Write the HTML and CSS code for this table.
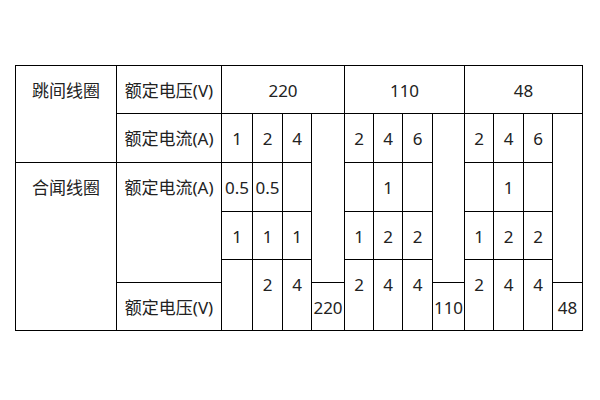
FILE: index.html
```html
<!DOCTYPE html>
<html lang="zh">
<head>
<meta charset="utf-8">
<link rel="stylesheet" href="styles.css">
</head>
<body>
<div class="page">
<table class="spec">
  <colgroup>
    <col class="c-name"><col class="c-label">
    <col class="w31"><col class="w30"><col class="w29"><col class="w33">
    <col class="w29"><col class="w29"><col class="w30"><col class="w32">
    <col class="w29"><col class="w30"><col class="w29"><col class="w30">
  </colgroup>
  <tr class="r48">
    <td rowspan="2">跳间线圈</td>
    <td>额定电压(V)</td>
    <td colspan="4">220</td>
    <td colspan="4">110</td>
    <td colspan="4">48</td>
  </tr>
  <tr class="r49">
    <td>额定电流(A)</td>
    <td>1</td><td>2</td><td>4</td><td rowspan="4"></td>
    <td>2</td><td>4</td><td>6</td><td rowspan="4"></td>
    <td>2</td><td>4</td><td>6</td><td rowspan="4"></td>
  </tr>
  <tr class="r49">
    <td rowspan="4">合闻线圈</td>
    <td rowspan="3">额定电流(A)</td>
    <td>0.5</td><td>0.5</td><td></td>
    <td></td><td>1</td><td></td>
    <td></td><td>1</td><td></td>
  </tr>
  <tr class="r48">
    <td>1</td><td>1</td><td>1</td>
    <td>1</td><td>2</td><td>2</td>
    <td>1</td><td>2</td><td>2</td>
  </tr>
  <tr class="r23">
    <td rowspan="2"></td><td rowspan="2">2</td><td rowspan="2">4</td>
    <td rowspan="2">2</td><td rowspan="2">4</td><td rowspan="2">4</td>
    <td rowspan="2">2</td><td rowspan="2">4</td><td rowspan="2">4</td>
  </tr>
  <tr class="r48">
    <td>额定电压(V)</td>
    <td>220</td>
    <td>110</td>
    <td>48</td>
  </tr>
</table>
</div>
</body>
</html>
```

FILE: styles.css
```css
html, body {
  margin: 0;
  padding: 0;
  background: #ffffff;
}

.page {
  padding: 65px 0 0 15px;
}

.spec {
  border-collapse: collapse;
  table-layout: fixed;
  width: 568px;
  font-family: "Noto Sans", "Noto Sans CJK SC", sans-serif;
  font-size: 17px;
  color: #222222;
}

.spec td {
  border: 1px solid #000000;
  padding: 13px 0 0 0;
  line-height: 24px;
  text-align: center;
  vertical-align: top;
  white-space: nowrap;
  overflow: visible;
}

.c-name { width: 101px; }
.c-label { width: 105px; }
.w29 { width: 29px; }
.w30 { width: 30px; }
.w31 { width: 31px; }
.w32 { width: 32px; }
.w33 { width: 33px; }

.r48 { height: 48px; }
.r49 { height: 49px; }
.r23 { height: 23px; }
```
